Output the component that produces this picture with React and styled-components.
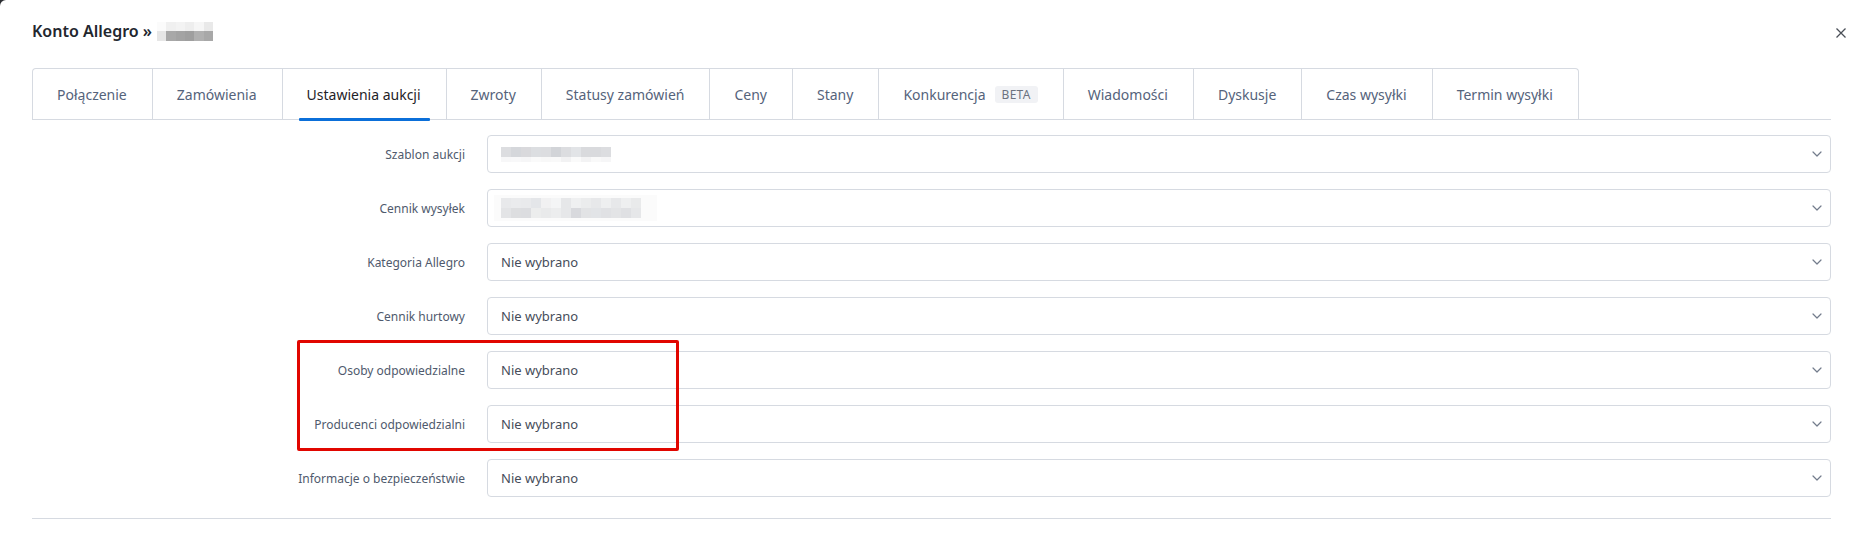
import React from 'react';
import styled, { createGlobalStyle } from 'styled-components';

const GlobalStyle = createGlobalStyle`
  html, body { margin: 0; padding: 0; background: #2b2d31; }
  body { font-family: "Noto Sans", "Open Sans", sans-serif; }
  * { box-sizing: border-box; }
`;

const Modal = styled.div`
  width: 100%;
  min-height: 538px;
  background: #fff;
  border-top-left-radius: 6px;
  overflow: hidden;
`;

const Header = styled.header`
  display: flex;
  align-items: center;
  justify-content: space-between;
  height: 66px;
  padding: 0 17px 0 32px;
`;

const Title = styled.h4`
  margin: -4px 0 0;
  display: flex;
  align-items: center;
  gap: 5px;
  font-size: 16px;
  font-weight: 600;
  color: #23272e;
`;

const CloseButton = styled.button`
  width: 10px;
  height: 10px;
  padding: 0;
  border: 0;
  background: none;
  display: flex;
  cursor: pointer;
`;

const TabBar = styled.nav`
  display: flex;
  margin: 2px 32px 0;
  border-bottom: 1px solid #d6dae1;
`;

const Tab = styled.div`
  position: relative;
  display: flex;
  align-items: center;
  height: 51px;
  padding: 0 25px 0 24px;
  border-top: 1px solid #d6dae1;
  border-right: 1px solid #d6dae1;
  font-size: 14px;
  color: ${(p) => (p.$active ? '#1f2328' : '#55637b')};
  white-space: nowrap;
  &:first-child {
    border-left: 1px solid #d6dae1;
    border-top-left-radius: 4px;
  }
  &:last-child {
    border-top-right-radius: 4px;
  }
  ${(p) =>
    p.$active &&
    `&::after {
      content: '';
      position: absolute;
      left: 16px;
      right: 16px;
      bottom: -2px;
      height: 3px;
      background: #0b6fd9;
      border-radius: 1px;
    }`}
`;

const Beta = styled.span`
  margin-left: 9px;
  height: 17px;
  line-height: 17px;
  padding: 0 7px;
  border-radius: 3px;
  background: #f1f2f5;
  color: #6b7280;
  font-size: 12px;
  letter-spacing: 0.3px;
`;

const Form = styled.div`
  position: relative;
  margin: 15px 32px 0;
  display: flex;
  flex-direction: column;
  gap: 16px;
  padding-bottom: 21px;
  border-bottom: 1px solid #d6dae1;
`;

const Row = styled.div`
  display: grid;
  grid-template-columns: 433px 1fr;
  column-gap: 22px;
  align-items: center;
`;

const Label = styled.label`
  text-align: right;
  font-size: 12px;
  color: #4f5a6d;
`;

const Select = styled.div`
  height: 38px;
  border: 1px solid #d6dae1;
  border-radius: 4px;
  display: flex;
  align-items: center;
  justify-content: space-between;
  padding: 0 8px 0 13px;
  font-size: 13px;
  color: #464d5a;
`;

const Highlight = styled.div`
  position: absolute;
  left: 265px;
  top: 205px;
  width: 382px;
  height: 111px;
  border: 3px solid #e10600;
  border-radius: 2px;
  pointer-events: none;
`;

const MosaicGrid = styled.span`
  display: inline-grid;
  grid-template-columns: repeat(${(p) => p.$cols}, ${(p) => p.$w}px);
  grid-template-rows: ${(p) => p.$rows};
  padding: ${(p) => p.$pad || '0'};
  background: ${(p) => p.$halo || 'transparent'};
`;

const Mosaic = ({ cells, w, rows, pad, halo }) => (
  <MosaicGrid $cols={cells[0].length} $w={w} $rows={rows} $pad={pad} $halo={halo}>
    {cells.flatMap((r, i) => r.map((c, j) => <span key={i + '-' + j} style={{ background: c }} />))}
  </MosaicGrid>
);

const titleCells = [
  ['#fbfbfb', '#f0f0f0', '#f3f3f3', '#eeeeee', '#f6f6f6', '#e9e9e9'],
  ['#e6e6e6', '#a8a8a8', '#a3a3a3', '#9f9f9f', '#b0b0b0', '#a8a8a8'],
];

const row1Cells = [
  ['#dcdde0', '#d5d7db', '#d9d9dc', '#dcdee1', '#dcdde0', '#d2d4d8', '#dcdde0', '#e2e4e7', '#d9dadd', '#d9dadd', '#dcdde0'],
  ['#f7f7f8', '#f8f8f9', '#f6f6f7', '#fafafa', '#f8f8f8', '#f9f9f9', '#f2f2f3', '#fafafa', '#f3f3f4', '#f9f9f9', '#f6f6f7'],
];

const row2Cells = [
  ['#e8e9eb', '#eaebed', '#e9eaec', '#e4e6e9', '#f1f1f2', '#f4f5f6', '#e6e7e9', '#eff0f1', '#ebeced', '#e7e8ea', '#eeeff0', '#e7e8ea', '#eeeff0', '#e9eaeb'],
  ['#e3e4e6', '#dddee0', '#dcdde0', '#eceded', '#e9eaeb', '#ecedee', '#e6e7e9', '#d8d9dd', '#e2e3e5', '#e2e4e7', '#e0e1e4', '#e3e4e6', '#dfe0e3', '#e6e7e9'],
];

const Chevron = () => (
  <svg width="10" height="6" viewBox="0 0 10 6" fill="none">
    <path d="M1 1l4 4 4-4" stroke="#737c8c" strokeWidth="1.2" strokeLinecap="round" strokeLinejoin="round" />
  </svg>
);

const tabs = [
  'Połączenie',
  'Zamówienia',
  'Ustawienia aukcji',
  'Zwroty',
  'Statusy zamówień',
  'Ceny',
  'Stany',
  'Konkurencja',
  'Wiadomości',
  'Dyskusje',
  'Czas wysyłki',
  'Termin wysyłki',
];

const rows = [
  { label: 'Szablon aukcji', value: <Mosaic cells={row1Cells} w={10} rows="10px 5px" /> },
  {
    label: 'Cennik wysyłek',
    value: <Mosaic cells={row2Cells} w={10} rows="10px 10px" pad="3px 16px 3px 7px" halo="#fbfbfb" />,
    shift: true,
  },
  { label: 'Kategoria Allegro', value: 'Nie wybrano' },
  { label: 'Cennik hurtowy', value: 'Nie wybrano' },
  { label: 'Osoby odpowiedzialne', value: 'Nie wybrano' },
  { label: 'Producenci odpowiedzialni', value: 'Nie wybrano' },
  { label: 'Informacje o bezpieczeństwie', value: 'Nie wybrano' },
];

const ValueSlot = styled.span`
  display: flex;
  margin-left: ${(p) => (p.$shift ? '-7px' : '0')};
`;

export default function App() {
  return (
    <>
      <GlobalStyle />
      <Modal>
        <Header>
          <Title>
            Konto Allegro »
            <Mosaic cells={titleCells} w={9.33} rows="9px 10px" />
          </Title>
          <CloseButton aria-label="Zamknij">
            <svg width="10" height="10" viewBox="0 0 10 10">
              <path d="M0.5 0.5l9 9M9.5 0.5l-9 9" stroke="#4a4f57" strokeWidth="1.3" />
            </svg>
          </CloseButton>
        </Header>
        <TabBar>
          {tabs.map((t) => (
            <Tab key={t} $active={t === 'Ustawienia aukcji'}>
              {t}
              {t === 'Konkurencja' && <Beta>BETA</Beta>}
            </Tab>
          ))}
        </TabBar>
        <Form>
          {rows.map((r) => (
            <Row key={r.label}>
              <Label>{r.label}</Label>
              <Select>
                <ValueSlot $shift={r.shift}>{r.value}</ValueSlot>
                <Chevron />
              </Select>
            </Row>
          ))}
          <Highlight />
        </Form>
      </Modal>
    </>
  );
}
